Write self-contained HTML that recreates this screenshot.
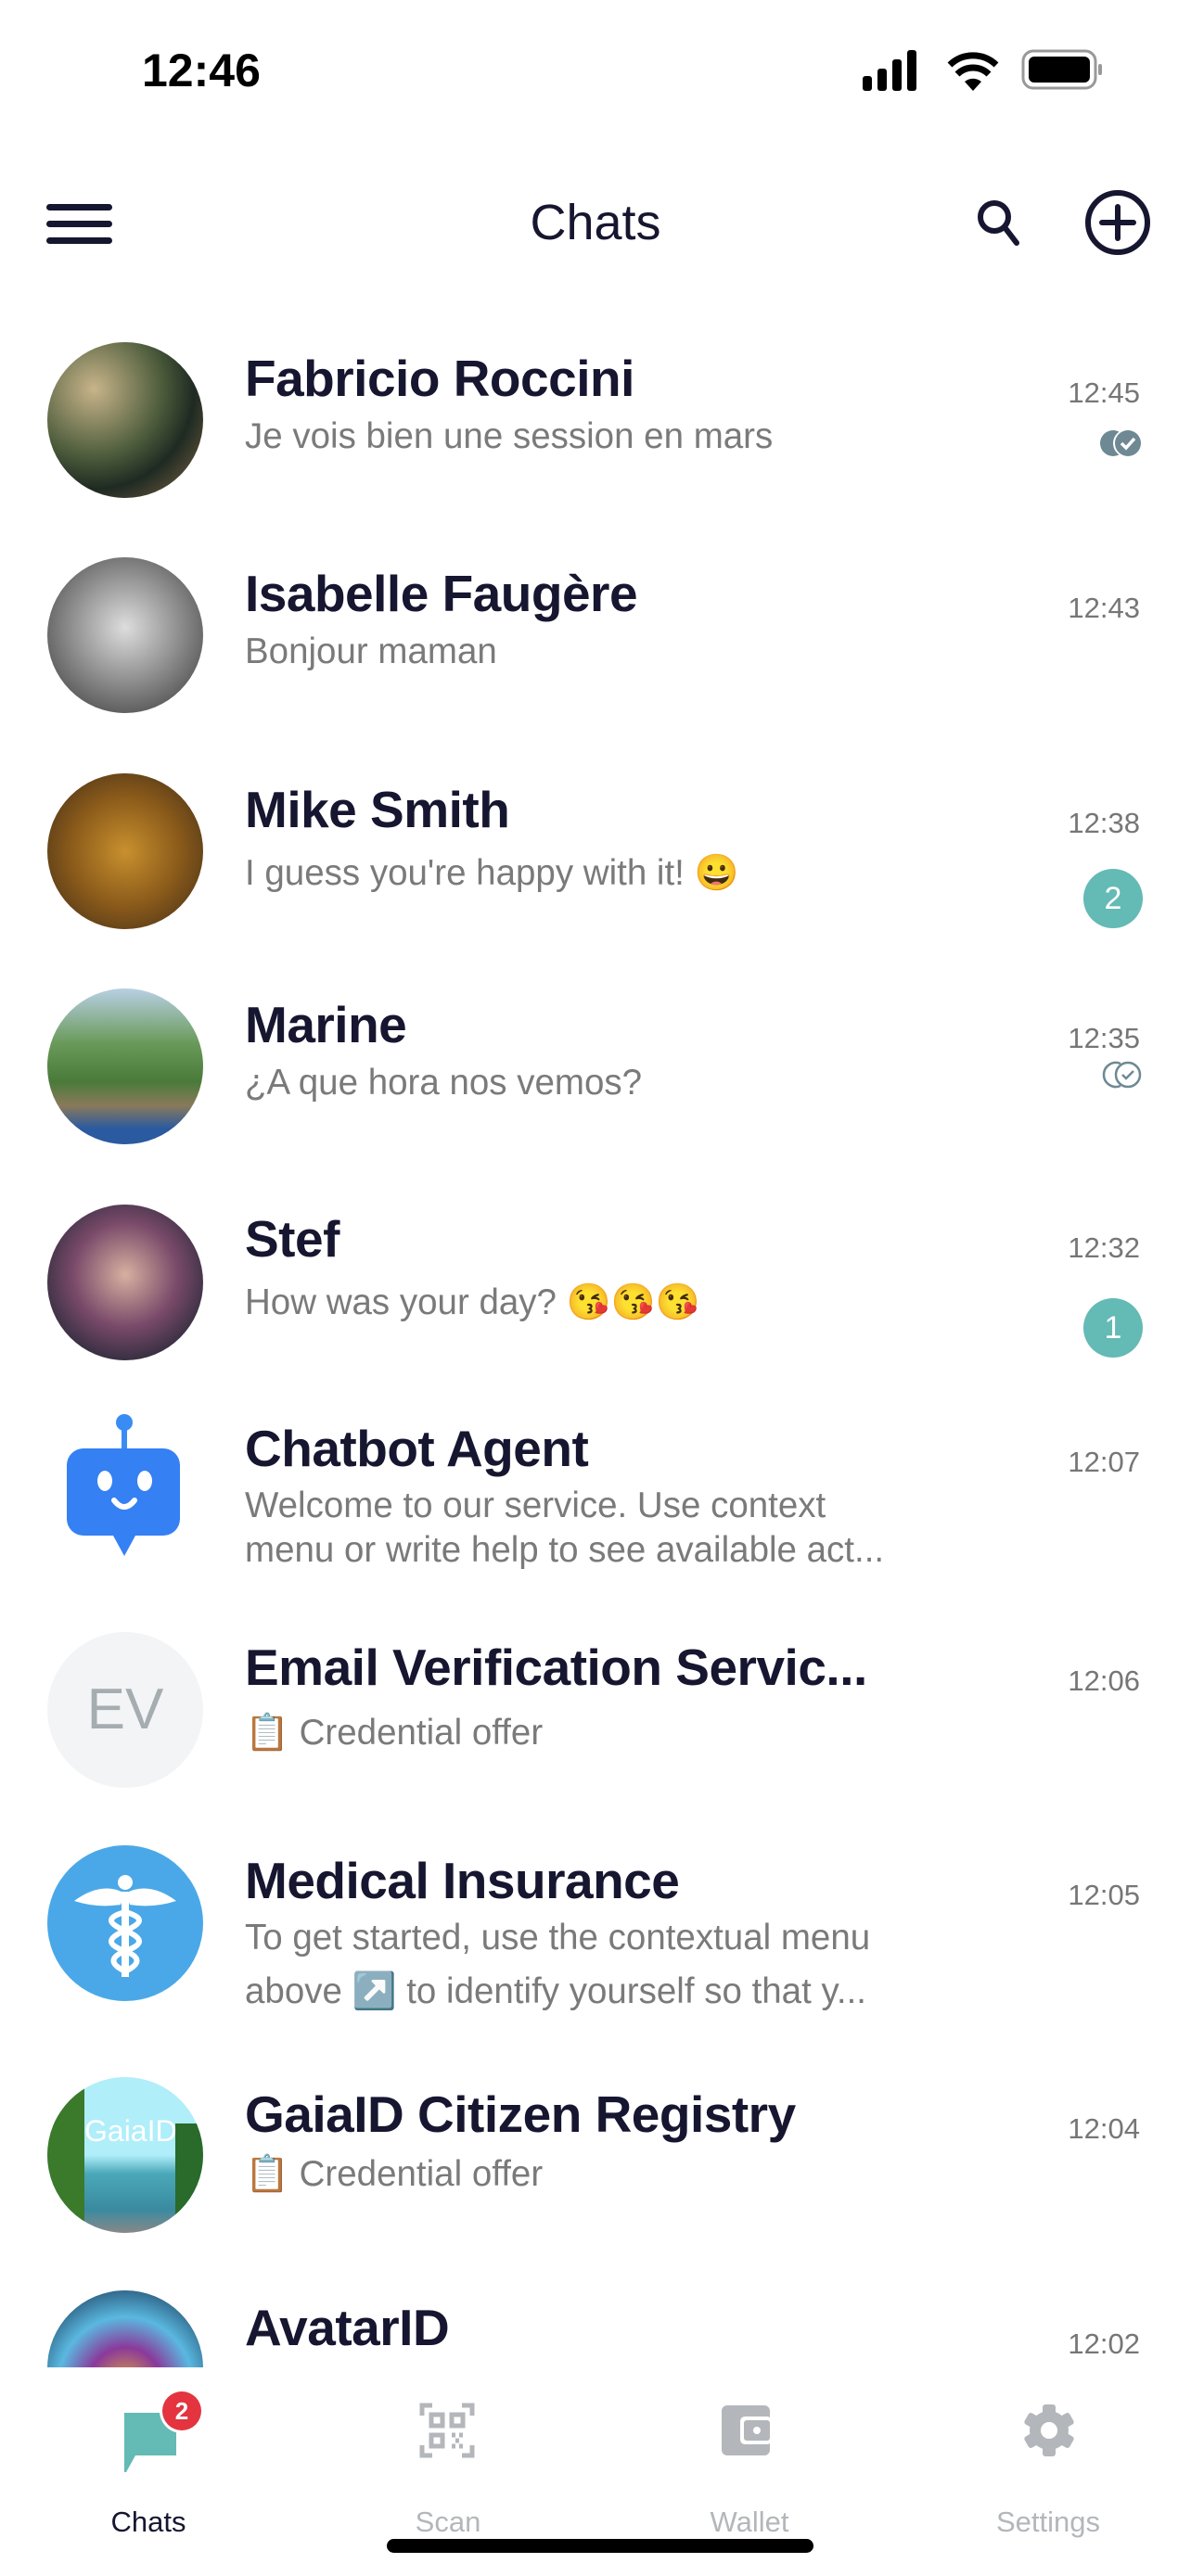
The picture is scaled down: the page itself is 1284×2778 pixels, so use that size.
<!DOCTYPE html>
<html><head><meta charset="utf-8"><style>
*{margin:0;padding:0;box-sizing:border-box}
body{width:1284px;height:2778px;background:#fff;position:relative;overflow:hidden;font-family:"Liberation Sans","Noto Sans CJK JP",sans-serif;color:#1a1a2e}
.a{position:absolute}
.av{position:absolute;left:51px;width:168px;height:168px;border-radius:50%;overflow:hidden}
.nm{position:absolute;left:264px;font-size:55px;line-height:60px;color:#161630;white-space:nowrap;font-weight:bold;letter-spacing:-0.5px}
.sb{position:absolute;left:264px;font-size:38.5px;line-height:48px;color:#7a7a7a;white-space:nowrap}
.tm{position:absolute;right:55px;font-size:31px;line-height:36px;color:#767676}
.bd{position:absolute;left:1168px;width:64px;height:64px;border-radius:50%;background:#64bab4;color:#fff;font-size:34px;line-height:64px;text-align:center}
.tab{position:absolute;top:2700px;font-size:31px;line-height:40px;color:#b3b7bb;text-align:center;width:240px}
</style></head><body>

<!-- status bar -->
<div class="a" style="left:153px;top:48px;font-size:50px;line-height:56px;font-weight:bold;color:#000">12:46</div>
<svg class="a" style="left:928px;top:52px" width="270" height="50" viewBox="0 0 270 50">
<rect x="2" y="30" width="10" height="16" rx="3" fill="#000"/><rect x="18" y="22" width="10" height="24" rx="3" fill="#000"/><rect x="34" y="12" width="10" height="34" rx="3" fill="#000"/><rect x="50" y="2" width="10" height="44" rx="3" fill="#000"/>
<path d="M121 46 L112 36 A14 14 0 0 1 130 36 Z" fill="#000"/>
<path d="M104 28 A24 24 0 0 1 138 28" stroke="#000" stroke-width="7" fill="none"/>
<path d="M96 18 A36 36 0 0 1 146 18" stroke="#000" stroke-width="7" fill="none"/>
<rect x="175" y="3" width="78" height="40" rx="11" fill="none" stroke="#999" stroke-width="3"/>
<rect x="181" y="9" width="66" height="28" rx="6" fill="#000"/>
<rect x="256" y="17" width="4" height="12" rx="2" fill="#999"/>
</svg>

<!-- header -->
<div class="a" style="left:50px;top:220px;width:71px;height:7px;border-radius:4px;background:#161630"></div>
<div class="a" style="left:50px;top:238px;width:71px;height:7px;border-radius:4px;background:#161630"></div>
<div class="a" style="left:50px;top:256px;width:71px;height:7px;border-radius:4px;background:#161630"></div>
<div class="a" style="left:0;width:1284px;top:210px;text-align:center;font-size:54px;line-height:60px;color:#161630">Chats</div>
<svg class="a" style="left:1048px;top:210px" width="60" height="60" viewBox="0 0 60 60"><circle cx="24" cy="24" r="15" stroke="#161630" stroke-width="6" fill="none"/><line x1="35" y1="35" x2="48" y2="52" stroke="#161630" stroke-width="6" stroke-linecap="round"/></svg>
<svg class="a" style="left:1168px;top:203px" width="74" height="74" viewBox="0 0 74 74"><circle cx="37" cy="37" r="32" stroke="#161630" stroke-width="6" fill="none"/><line x1="37" y1="20" x2="37" y2="54" stroke="#161630" stroke-width="6" stroke-linecap="round"/><line x1="20" y1="37" x2="54" y2="37" stroke="#161630" stroke-width="6" stroke-linecap="round"/></svg>

<!-- row 1 -->
<div class="av" style="top:369px;background:radial-gradient(circle at 30% 30%,#c8b48a,#4a5a3a 45%,#1e2a22 65%,#8a6a4a)"></div>
<div class="nm" style="top:378px">Fabricio Roccini</div>
<div class="sb" style="top:447px">Je vois bien une session en mars</div>
<div class="tm" style="top:406px">12:45</div>
<svg class="a" style="left:1184px;top:462px" width="48" height="32" viewBox="0 0 48 32"><circle cx="16" cy="16" r="14" fill="#6e8993"/><circle cx="31" cy="16" r="15" fill="#fff"/><circle cx="32" cy="16" r="14" fill="#6e8993"/><path d="M25 16 l5 5 l9 -10" stroke="#fff" stroke-width="3.5" fill="none"/></svg>

<!-- row 2 -->
<div class="av" style="top:601px;background:radial-gradient(circle at 50% 45%,#ddd,#9a9a9a 40%,#555 80%)"></div>
<div class="nm" style="top:610px">Isabelle Faugère</div>
<div class="sb" style="top:679px">Bonjour maman</div>
<div class="tm" style="top:638px">12:43</div>

<!-- row 3 -->
<div class="av" style="top:834px;background:radial-gradient(circle at 50% 50%,#c8902e,#8a5a1a 50%,#3a2a18)"></div>
<div class="nm" style="top:843px">Mike Smith</div>
<div class="sb" style="top:918px">I guess you're happy with it! 😀</div>
<div class="tm" style="top:870px">12:38</div>
<div class="bd" style="top:937px">2</div>

<!-- row 4 -->
<div class="av" style="top:1066px;background:linear-gradient(180deg,#b8d0e4 0%,#6a9a5a 35%,#4a7a3a 60%,#8a7a5a 75%,#2a5aa0 90%)"></div>
<div class="nm" style="top:1075px">Marine</div>
<div class="sb" style="top:1144px">¿A que hora nos vemos?</div>
<div class="tm" style="top:1102px">12:35</div>
<svg class="a" style="left:1184px;top:1143px" width="48" height="32" viewBox="0 0 48 32"><path d="M24 4 A13 13 0 1 0 24 28" stroke="#6e8993" stroke-width="2.5" fill="none"/><circle cx="32" cy="16" r="13" stroke="#6e8993" stroke-width="2.5" fill="#fff"/><path d="M26 16 l4 4 l8 -8" stroke="#6e8993" stroke-width="2.5" fill="none"/></svg>

<!-- row 5 -->
<div class="av" style="top:1299px;background:radial-gradient(circle at 50% 45%,#d8b0a0,#7a4a6a 45%,#2a2a3a 80%)"></div>
<div class="nm" style="top:1306px">Stef</div>
<div class="sb" style="top:1381px">How was your day? 😘😘😘</div>
<div class="tm" style="top:1328px">12:32</div>
<div class="bd" style="top:1400px">1</div>

<!-- row 6 chatbot -->
<svg class="a" style="left:70px;top:1522px" width="130" height="170" viewBox="0 0 130 170"><line x1="64" y1="12" x2="64" y2="40" stroke="#3a8cf5" stroke-width="6"/><circle cx="64" cy="12" r="9" fill="#3a8cf5"/><rect x="2" y="40" width="122" height="94" rx="18" fill="#3580f3"/><path d="M52 134 L64 156 L76 134 Z" fill="#3580f3"/><ellipse cx="43" cy="75" rx="8" ry="11" fill="#fff"/><ellipse cx="86" cy="75" rx="8" ry="11" fill="#fff"/><path d="M53 96 Q64 110 75 96" stroke="#fff" stroke-width="6" fill="none" stroke-linecap="round"/></svg>
<div class="nm" style="top:1532px">Chatbot Agent</div>
<div class="sb" style="top:1600px">Welcome to our service. Use context</div>
<div class="sb" style="top:1648px">menu or write help to see available act...</div>
<div class="tm" style="top:1559px">12:07</div>

<!-- row 7 EV -->
<div class="av" style="top:1760px;background:#f3f4f6;color:#a6adb1;font-size:62px;line-height:168px;text-align:center">EV</div>
<div class="nm" style="top:1768px">Email Verification Servic...</div>
<div class="sb" style="top:1845px">📋 Credential offer</div>
<div class="tm" style="top:1795px">12:06</div>

<!-- row 8 medical -->
<div class="av" style="top:1990px;background:#4aa8e8"></div>
<svg class="a" style="left:80px;top:2018px" width="110" height="120" viewBox="0 0 110 120"><g fill="#fff"><circle cx="55" cy="12" r="8"/><path d="M55 24 Q30 10 0 32 Q25 40 50 36 Z"/><path d="M55 24 Q80 10 110 32 Q85 40 60 36 Z"/><rect x="51" y="22" width="8" height="92"/></g><path d="M55 44 Q25 52 55 64 Q85 76 55 86 Q30 96 55 108" stroke="#fff" stroke-width="6" fill="none"/><path d="M55 44 Q85 52 55 64 Q25 76 55 86 Q80 96 55 108" stroke="#fff" stroke-width="6" fill="none"/></svg>
<div class="nm" style="top:1998px">Medical Insurance</div>
<div class="sb" style="top:2066px">To get started, use the contextual menu</div>
<div class="sb" style="top:2124px">above ↗️ to identify yourself so that y...</div>
<div class="tm" style="top:2026px">12:05</div>

<!-- row 9 gaia -->
<div class="av" style="top:2240px;background:linear-gradient(180deg,#b0eefa 0%,#b0eefa 50%,#4aa8b8 62%,#3a8aa0 85%,#888 100%)"><div style="position:absolute;left:0;top:0;width:40px;height:168px;background:#3a7a2a"></div><div style="position:absolute;right:0;top:50px;width:30px;height:118px;background:#2a6a2a"></div><div class="a" style="left:40px;top:40px;color:#fff;font-size:32px">GaiaID</div></div>
<div class="nm" style="top:2250px">GaiaID Citizen Registry</div>
<div class="sb" style="top:2321px">📋 Credential offer</div>
<div class="tm" style="top:2278px">12:04</div>

<!-- row 10 -->
<div class="a" style="left:0;top:2460px;width:1284px;height:93px;overflow:hidden">
<div class="av" style="top:10px;background:radial-gradient(circle at 50% 60%,#e0a040,#8a3a9a 30%,#5ab8e0 55%,#1a3a5a 90%)"></div>
<div class="nm" style="top:20px">AvatarID</div>
</div>
<div class="tm" style="top:2510px">12:02</div>

<!-- tab bar -->
<svg class="a" style="left:132px;top:2576px" width="100" height="90" viewBox="0 0 100 90"><path d="M2 26 h56 v46 h-44 l-10 18 h-2 z" fill="#64bab4"/><circle cx="64" cy="24" r="24" fill="#fff"/><circle cx="64" cy="24" r="21" fill="#e3343f"/><text x="64" y="33" text-anchor="middle" font-family="Liberation Sans" font-weight="bold" font-size="26" fill="#fff">2</text></svg>
<svg class="a" style="left:452px;top:2591px" width="60" height="60" viewBox="0 0 60 60" fill="none" stroke="#b3b7bb" stroke-width="5"><path d="M3 14 V3 H14 M46 3 H57 V14 M57 46 V57 H46 M14 57 H3 V46"/><rect x="13" y="13" width="12" height="12"/><rect x="35" y="13" width="12" height="12"/><rect x="13" y="35" width="12" height="12"/><path d="M35 35 h4 M43 35 h4 M39 41 h4 M35 47 h4 M43 47 h4"/></svg>
<svg class="a" style="left:776px;top:2592px" width="60" height="58" viewBox="0 0 60 58"><rect x="2" y="2" width="52" height="54" rx="6" fill="#b3b7bb"/><rect x="22" y="14" width="34" height="30" rx="5" fill="#fff"/><rect x="26" y="18" width="28" height="22" rx="3" fill="#b3b7bb"/><circle cx="40" cy="29" r="4" fill="#fff"/></svg>
<svg class="a" style="left:1102px;top:2591px" width="58" height="60" viewBox="0 0 58 60"><g fill="#b3b7bb"><circle cx="29" cy="30" r="21"/><rect x="22" y="2" width="14" height="56" rx="3"/><rect x="22" y="2" width="14" height="56" rx="3" transform="rotate(60 29 30)"/><rect x="22" y="2" width="14" height="56" rx="3" transform="rotate(-60 29 30)"/></g><circle cx="29" cy="30" r="9" fill="#fff"/></svg>
<div class="tab" style="left:40px;color:#161630">Chats</div>
<div class="tab" style="left:363px">Scan</div>
<div class="tab" style="left:688px">Wallet</div>
<div class="tab" style="left:1010px">Settings</div>
<div class="a" style="left:417px;top:2738px;width:460px;height:15px;border-radius:8px;background:#000"></div>
</body></html>
